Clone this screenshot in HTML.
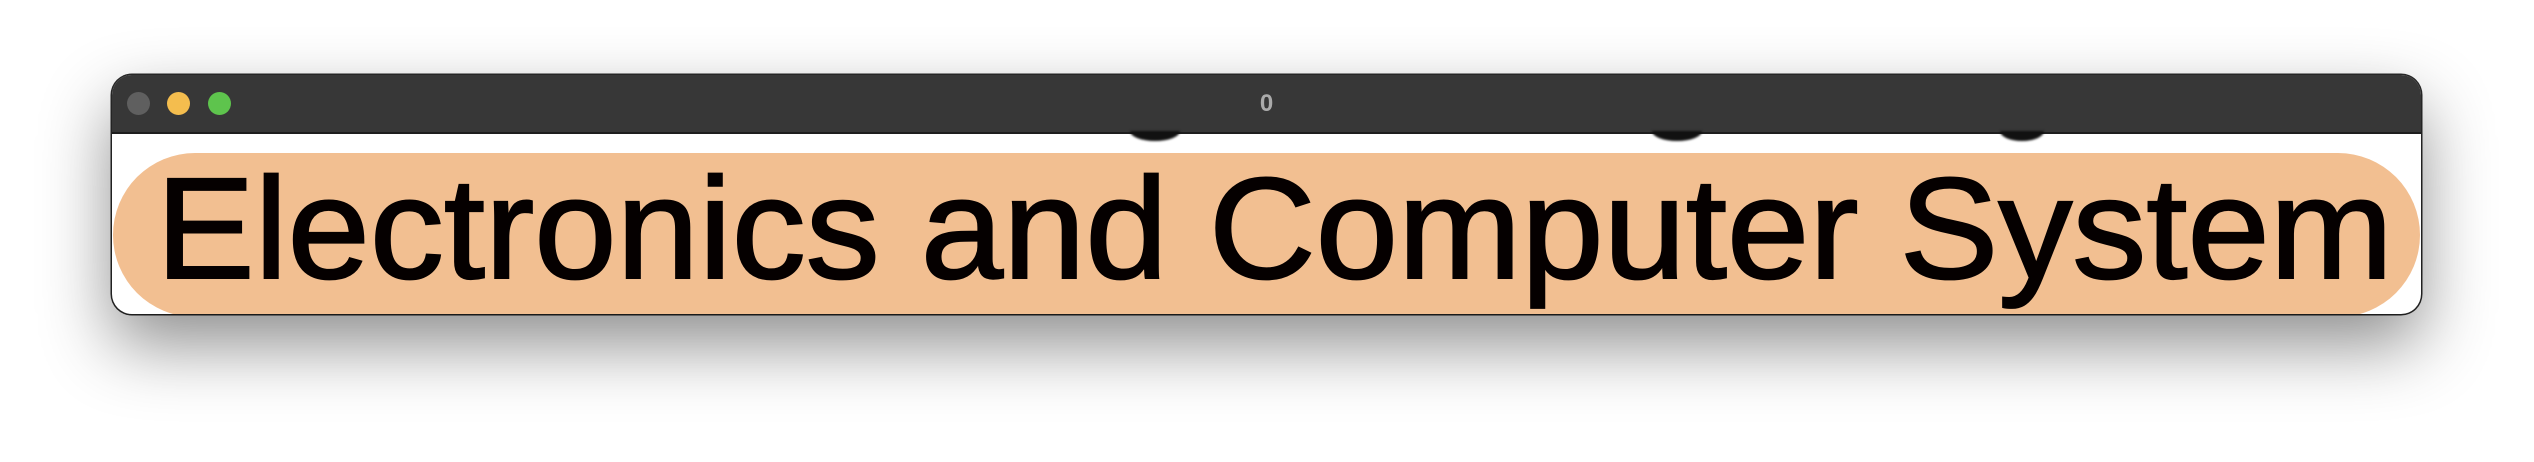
<!DOCTYPE html>
<html><head><meta charset="utf-8"><style>
html,body{margin:0;padding:0;width:2534px;height:462px;background:#fff;overflow:hidden;}
.win{position:absolute;left:112px;top:75px;width:2309px;height:239px;border-radius:20px;overflow:hidden;background:#fff;box-shadow:0 30px 70px rgba(0,0,0,0.45),0 0 0 1.5px #2a2a2a;}
.bar{position:absolute;left:0;top:0;width:100%;height:57px;background:#373737;border-bottom:2px solid #1e1e1e;}
.dot{position:absolute;top:17px;width:23px;height:23px;border-radius:50%;}
.t{position:absolute;left:0;width:100%;top:15px;text-align:center;font:bold 24px "Liberation Sans",sans-serif;color:#aaa;}
.pill{position:absolute;left:1px;top:78px;width:2307px;height:164px;border-radius:82px;background:#f2bf91;}
.bump{position:absolute;top:56px;height:10px;background:#111;border-radius:0 0 50% 50%/0 0 100% 100%;filter:blur(1px);}
</style></head><body>
<div class="win">
 <div class="bar"><div class="dot" style="left:15px;background:#5f5f5f"></div><div class="dot" style="left:55px;background:#f4bd4e"></div><div class="dot" style="left:96px;background:#5ec44d"></div><div class="t">0</div></div>
 <div class="bump" style="left:1018px;width:50px"></div>
 <div class="bump" style="left:1540px;width:50px"></div>
 <div class="bump" style="left:1888px;width:44px"></div>
 <div class="pill"></div>
 <svg style="position:absolute;left:0;top:0" width="2309" height="239"><text x="44" y="203" font-family="Liberation Sans, sans-serif" font-size="144" fill="#050000" stroke="#050000" stroke-width="2" textLength="2237" lengthAdjust="spacingAndGlyphs">Electronics and Computer System</text></svg>
</div>
</body></html>
